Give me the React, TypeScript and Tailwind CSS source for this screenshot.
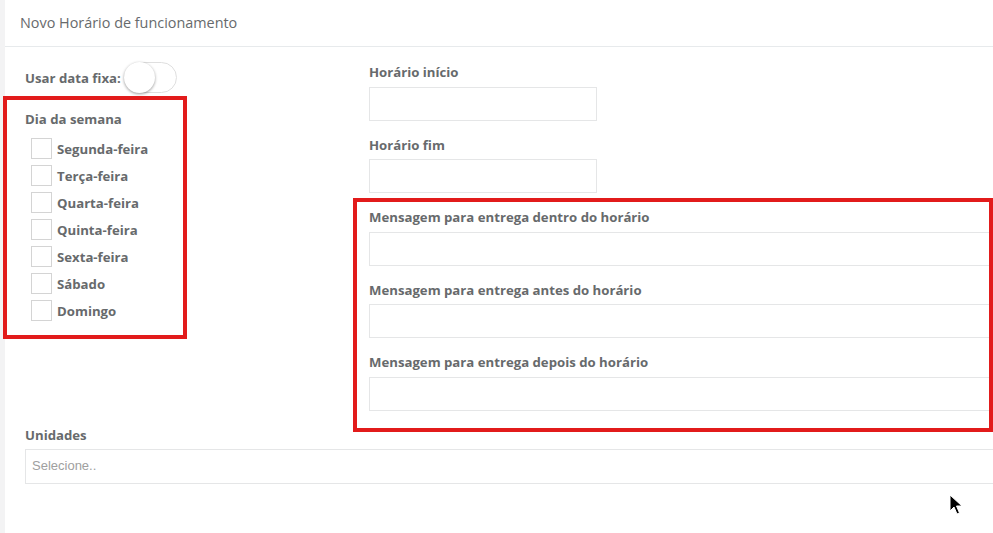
import React from "react";

const days = ["Segunda-feira", "Terça-feira", "Quarta-feira", "Quinta-feira", "Sexta-feira", "Sábado", "Domingo"];

function Field({ label, wide }: { label: string; wide?: boolean }) {
  return (
    <div className="mb-[15px]">
      <div className="text-[13.2px] font-bold leading-[18px] text-[#676a6c] mb-[5.5px]">{label}</div>
      <div className={`h-[34px] border border-[#e5e6e7] bg-white ${wide ? "w-full" : "w-[228px]"}`} />
    </div>
  );
}

export default function App() {
  return (
    <div className="relative w-[993px] h-[533px] overflow-hidden bg-white" style={{ fontFamily: '"Open Sans", "Liberation Sans", sans-serif' }}>
      <div className="flex h-full">
        <div className="w-[5px] shrink-0 bg-[#f3f3f4]" />
        <div className="w-[1030px] shrink-0 bg-white">
          <div className="h-[47px] border-b border-[#e7eaec] pl-[15px] flex items-center">
            <span className="text-[14.4px] text-[#676a6c] leading-[20px] -mt-[1px]">Novo Horário de funcionamento</span>
          </div>
          <div className="pl-[20px]">
            <div className="flex">
              <div className="w-[344px] shrink-0 pt-[15px]">
                <div className="flex items-center h-[31px]">
                  <span className="text-[13.2px] font-bold text-[#676a6c] leading-[18px]">Usar data fixa:</span>
                  <div className="ml-[3px] relative w-[53px] h-[31px] rounded-full border border-[#dfdfdf] bg-white">
                    <div className="absolute -left-px -top-px w-[31px] h-[31px] rounded-full bg-white shadow-[0_1px_3px_rgba(0,0,0,0.4)]" />
                  </div>
                </div>
                <div className="mt-[17px] text-[13.2px] font-bold text-[#676a6c] leading-[18px]">Dia da semana</div>
                <div className="mt-[10px] flex flex-col gap-[6px] pl-[6px]">
                  {days.map((d) => (
                    <div key={d} className="flex items-center h-[21px]">
                      <div className="w-[21px] h-[21px] border border-[#d4d4d4] bg-white" />
                      <span className="ml-[5px] text-[13.2px] font-bold text-[#676a6c] leading-[18px]">{d}</span>
                    </div>
                  ))}
                </div>
              </div>
              <div className="flex-1 pt-[16px]">
                <Field label="Horário início" />
                <Field label="Horário fim" />
                <Field label="Mensagem para entrega dentro do horário" wide />
                <Field label="Mensagem para entrega antes do horário" wide />
                <Field label="Mensagem para entrega depois do horário" wide />
              </div>
            </div>
            <div className="text-[13.2px] font-bold leading-[18px] text-[#676a6c] mb-[5px]">Unidades</div>
            <div className="h-[35px] border border-[#e5e6e7] flex items-center pl-[6px]">
              <span className="text-[13px] text-[#a0a0a0]" style={{ fontFamily: '"Liberation Sans", Arial, sans-serif' }}>Selecione..</span>
            </div>
          </div>
        </div>
      </div>

      <div className="absolute left-[3px] top-[96px] w-[184px] h-[243px] border-[4px] border-[#e21b1b] pointer-events-none" />
      <div className="absolute left-[353px] top-[198px] w-[640px] h-[234px] border-[4px] border-[#e21b1b] pointer-events-none" />

      <svg className="absolute left-[949px] top-[494px]" width="14" height="22" viewBox="0 0 14 22">
        <path d="M1 1 L1 17 L5 13 L8 20 L10.5 19 L7.5 12 L13 12 Z" fill="#000" stroke="#fff" strokeWidth="1" strokeLinejoin="round" />
      </svg>
    </div>
  );
}
